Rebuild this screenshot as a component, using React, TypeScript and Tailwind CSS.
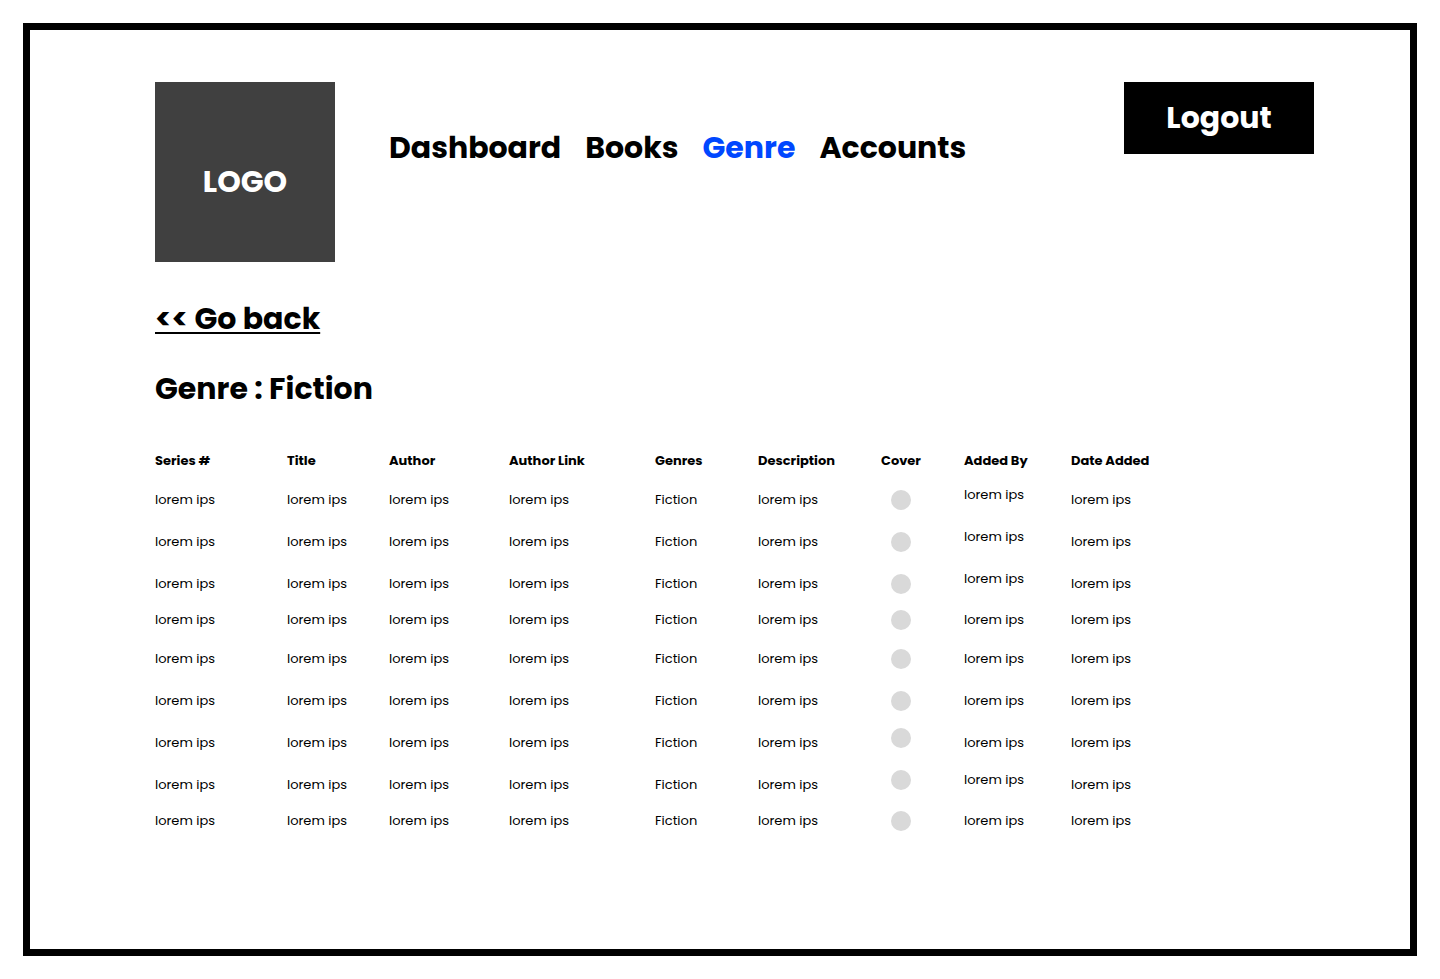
import React from "react";
import clsx from "clsx";

type Book = {
  height: string;
  coverRaised?: boolean;
  addedByRaised?: boolean;
};

const navItems = [
  { label: "Dashboard", href: "#dashboard" },
  { label: "Books", href: "#books" },
  { label: "Genre", href: "#genre", active: true },
  { label: "Accounts", href: "#accounts" },
];

const columns = [
  { label: "Series #", width: "w-[132px]" },
  { label: "Title", width: "w-[102px]" },
  { label: "Author", width: "w-[120px]" },
  { label: "Author Link", width: "w-[146px]" },
  { label: "Genres", width: "w-[103px]" },
  { label: "Description", width: "w-[123px]" },
  { label: "Cover", width: "w-[83px]" },
  { label: "Added By", width: "w-[107px]" },
  { label: "Date Added", width: "w-auto" },
];

const books: Book[] = [
  { height: "h-[42px]", addedByRaised: true },
  { height: "h-[42px]", addedByRaised: true },
  { height: "h-[36px]", addedByRaised: true },
  { height: "h-[39px]" },
  { height: "h-[42px]" },
  { height: "h-[42px]" },
  { height: "h-[42px]", coverRaised: true },
  { height: "h-[36px]", coverRaised: true, addedByRaised: true },
  { height: "h-[42px]" },
];

function Cell({ raised, children }: { raised?: boolean; children: React.ReactNode }) {
  return <td className={clsx("align-top", raised ? "pt-0" : "pt-[5px]")}>{children}</td>;
}

export default function App() {
  return (
    <div className="flex min-h-screen bg-white p-[23px] font-['Poppins','Inter',sans-serif] text-black">
      <div className="flex-1 border-[7px] border-black pt-[52px] pr-24 pb-12 pl-[125px]">
        <header className="flex items-start">
          <div className="flex size-[180px] shrink-0 items-center justify-center bg-[#404040] pt-5 text-[30px] leading-10 font-bold text-white">
            LOGO
          </div>
          <nav className="mt-[46px] ml-[54px] flex gap-6 text-[30px] leading-10 font-bold">
            {navItems.map((item) => (
              <a
                key={item.label}
                href={item.href}
                aria-current={item.active ? "page" : undefined}
                className={item.active ? "text-[#0047ff]" : "text-black"}
              >
                {item.label}
              </a>
            ))}
          </nav>
          <button
            type="button"
            className="ml-auto h-[72px] w-[190px] shrink-0 bg-black text-[30px] leading-10 font-bold text-white"
          >
            Logout
          </button>
        </header>

        <main>
          <a
            href="#genre"
            className="mt-[37px] inline-block text-[30px] leading-10 font-bold underline decoration-2 underline-offset-3"
          >
            &lt;&lt; Go back
          </a>
          <h1 className="mt-[30px] text-[30px] leading-10 font-bold">Genre : Fiction</h1>

          <table className="mt-[42px] w-full table-fixed border-collapse text-left text-[13px] leading-5">
            <thead>
              <tr className="h-[34px]">
                {columns.map((column) => (
                  <th key={column.label} scope="col" className={clsx("p-0 align-top font-bold", column.width)}>
                    {column.label}
                  </th>
                ))}
              </tr>
            </thead>
            <tbody>
              {books.map((book, index) => (
                <tr key={index} className={book.height}>
                  <Cell>lorem ips</Cell>
                  <Cell>lorem ips</Cell>
                  <Cell>lorem ips</Cell>
                  <Cell>lorem ips</Cell>
                  <Cell>Fiction</Cell>
                  <Cell>lorem ips</Cell>
                  <Cell raised={book.coverRaised}>
                    <div className="ml-2.5 size-5 rounded-full bg-[#d9d9d9]" />
                  </Cell>
                  <Cell raised={book.addedByRaised}>lorem ips</Cell>
                  <Cell>lorem ips</Cell>
                </tr>
              ))}
            </tbody>
          </table>
        </main>
      </div>
    </div>
  );
}
